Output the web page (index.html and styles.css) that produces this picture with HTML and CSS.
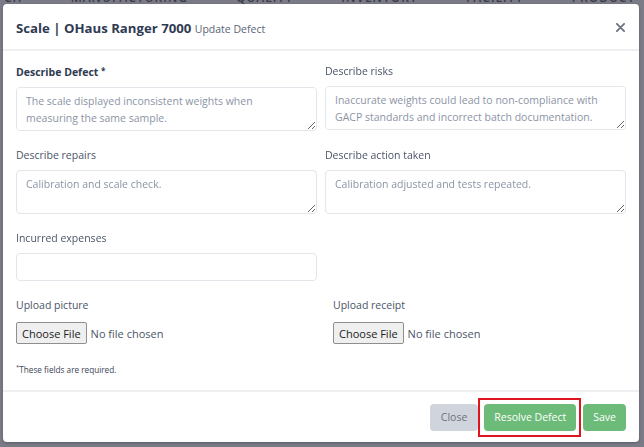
FILE: index.html
```html
<!DOCTYPE html>
<html>
<head>
<meta charset="utf-8">
<link rel="stylesheet" href="styles.css">
</head>
<body>
<div class="page">
  <nav class="topnav">
    <span>CH</span><span>MANUFACTURING</span><span>QUALITY</span><span>INVENTORY</span><span>FACILITY</span><span>PRODUCT BAGS</span>
  </nav>
</div>
<div class="modal">
  <div class="modal-header">
    <h1 class="modal-title">Scale | OHaus Ranger 7000 <small>Update Defect</small></h1>
    <button class="close-x" aria-label="Close">
      <svg width="9" height="9" viewBox="0 0 10 10"><path d="M1 1L9 9M9 1L1 9" stroke="#6b7280" stroke-width="2" stroke-linecap="round"/></svg>
    </button>
  </div>
  <div class="modal-body">
    <div class="grid2">
      <div class="field">
        <label class="lbl strong">Describe Defect <sup>*</sup></label>
        <textarea placeholder="The scale displayed inconsistent weights when measuring the same sample."></textarea>
      </div>
      <div class="field">
        <label class="lbl">Describe risks</label>
        <textarea placeholder="Inaccurate weights could lead to non-compliance with GACP standards and incorrect batch documentation."></textarea>
      </div>
      <div class="field">
        <label class="lbl">Describe repairs</label>
        <textarea placeholder="Calibration and scale check."></textarea>
      </div>
      <div class="field">
        <label class="lbl">Describe action taken</label>
        <textarea placeholder="Calibration adjusted and tests repeated."></textarea>
      </div>
      <div class="field">
        <label class="lbl">Incurred expenses</label>
        <input class="text-input" type="text">
      </div>
    </div>
    <div class="grid-upload">
      <div class="field">
        <label class="lbl">Upload picture</label>
        <input type="file">
      </div>
      <div class="field">
        <label class="lbl">Upload receipt</label>
        <input type="file">
      </div>
    </div>
    <p class="req"><sup>*</sup>These fields are required.</p>
  </div>
  <div class="modal-footer">
    <button class="btn btn-gray">Close</button>
    <span class="highlight"><button class="btn btn-green">Resolve Defect</button></span>
    <button class="btn btn-green">Save</button>
  </div>
</div>
</body>
</html>
```
FILE: styles.css
```css
html, body {
  margin: 0;
  padding: 0;
  width: 644px;
  height: 447px;
  overflow: hidden;
  background: #7b7b87;
  font-family: "Open Sans", "Noto Sans", sans-serif;
}
.page {
  height: 447px;
}
.topnav {
  display: flex;
  gap: 48px;
  padding: 0 0 0 4px;
  margin-top: -9px;
  font-size: 12px;
  font-weight: 600;
  letter-spacing: 1px;
  color: #3c3c4a;
  line-height: 14px;
}
.modal {
  position: absolute;
  left: 3px;
  top: 4px;
  width: 636px;
  height: 438px;
  background: #fff;
  border-radius: 4px;
  display: flex;
  flex-direction: column;
  box-shadow: 0 1px 3px rgba(0,0,0,0.25);
}
.modal-header {
  height: 47px;
  flex: none;
  box-sizing: border-box;
  display: flex;
  align-items: center;
  justify-content: space-between;
  padding: 0 14px 0 13px;
  border-bottom: 2px solid #eeeff1;
}
.modal-title {
  margin: 0;
  font-size: 13.2px;
  font-weight: 700;
  color: #2f3b52;
  padding-top: 2px;
}
.modal-title small {
  font-size: 10.5px;
  font-weight: 400;
  color: #5a6478;
}
.close-x {
  border: 0;
  background: none;
  padding: 0;
  margin-top: 2px;
  display: flex;
  cursor: pointer;
}
.modal-body {
  padding: 12px 13px 0 13px;
  flex: 1;
}
.grid2 {
  display: grid;
  grid-template-columns: 301px 301px;
  column-gap: 8px;
  row-gap: 16px;
}
.field {
  display: flex;
  flex-direction: column;
}
.lbl {
  font-size: 10.5px;
  line-height: 16px;
  color: #4b5568;
  margin-bottom: 7px;
}
.lbl.strong {
  font-weight: 700;
  color: #2f3b52;
}
.lbl sup {
  font-size: 8px;
  vertical-align: 2px;
}
textarea {
  box-sizing: border-box;
  height: 44px;
  width: 100%;
  border: 1px solid #e2e5ea;
  border-radius: 4px;
  padding: 5px 9px;
  font-family: "Open Sans", "Noto Sans", sans-serif;
  font-size: 10.5px;
  line-height: 17px;
  resize: vertical;
  margin: 0;
}
textarea::placeholder {
  color: #8b94a5;
}
.text-input {
  box-sizing: border-box;
  height: 28px;
  width: 100%;
  border: 1px solid #e2e5ea;
  border-radius: 4px;
  margin: 0;
}
.grid-upload {
  display: grid;
  grid-template-columns: 317px 1fr;
  margin-top: 16px;
}
.grid-upload .lbl {
  margin-bottom: 9px;
}
input[type=file] {
  font-family: "Open Sans", "Noto Sans", sans-serif;
  font-size: 11px;
  color: #4b5568;
}
input[type=file]::file-selector-button {
  font-family: "Open Sans", "Noto Sans", sans-serif;
  font-size: 11px;
  color: #222;
  background: #efefef;
  border: 1px solid #8f8f8f;
  border-radius: 2px;
  padding: 2px 5px;
  height: 22px;
  margin-right: 4px;
}
.req {
  margin: 19px 0 0 0;
  font-size: 8.2px;
  color: #3c4456;
}
.req sup {
  font-size: 6px;
}
.modal-footer {
  height: 52px;
  flex: none;
  box-sizing: border-box;
  border-top: 2px solid #eeeff1;
  display: flex;
  align-items: center;
  justify-content: flex-end;
  padding: 0 13px 0 0;
  gap: 7px;
}
.btn {
  height: 27px;
  border: 0;
  border-radius: 4px;
  font-family: "Open Sans", "Noto Sans", sans-serif;
  font-size: 10.5px;
  padding: 0 10px;
  cursor: pointer;
}
.btn-gray {
  background: #d0d4dc;
  color: #6c7380;
  padding: 0 11px;
}
.btn-green {
  background: #6dbb78;
  color: #fff;
}
.highlight {
  display: flex;
  border: 2px solid #e0141e;
  padding: 4px 3px 4px 4px;
  margin: 0 -5px 0 -7px;
}
.highlight .btn {
  padding: 0 10px;
}
```
